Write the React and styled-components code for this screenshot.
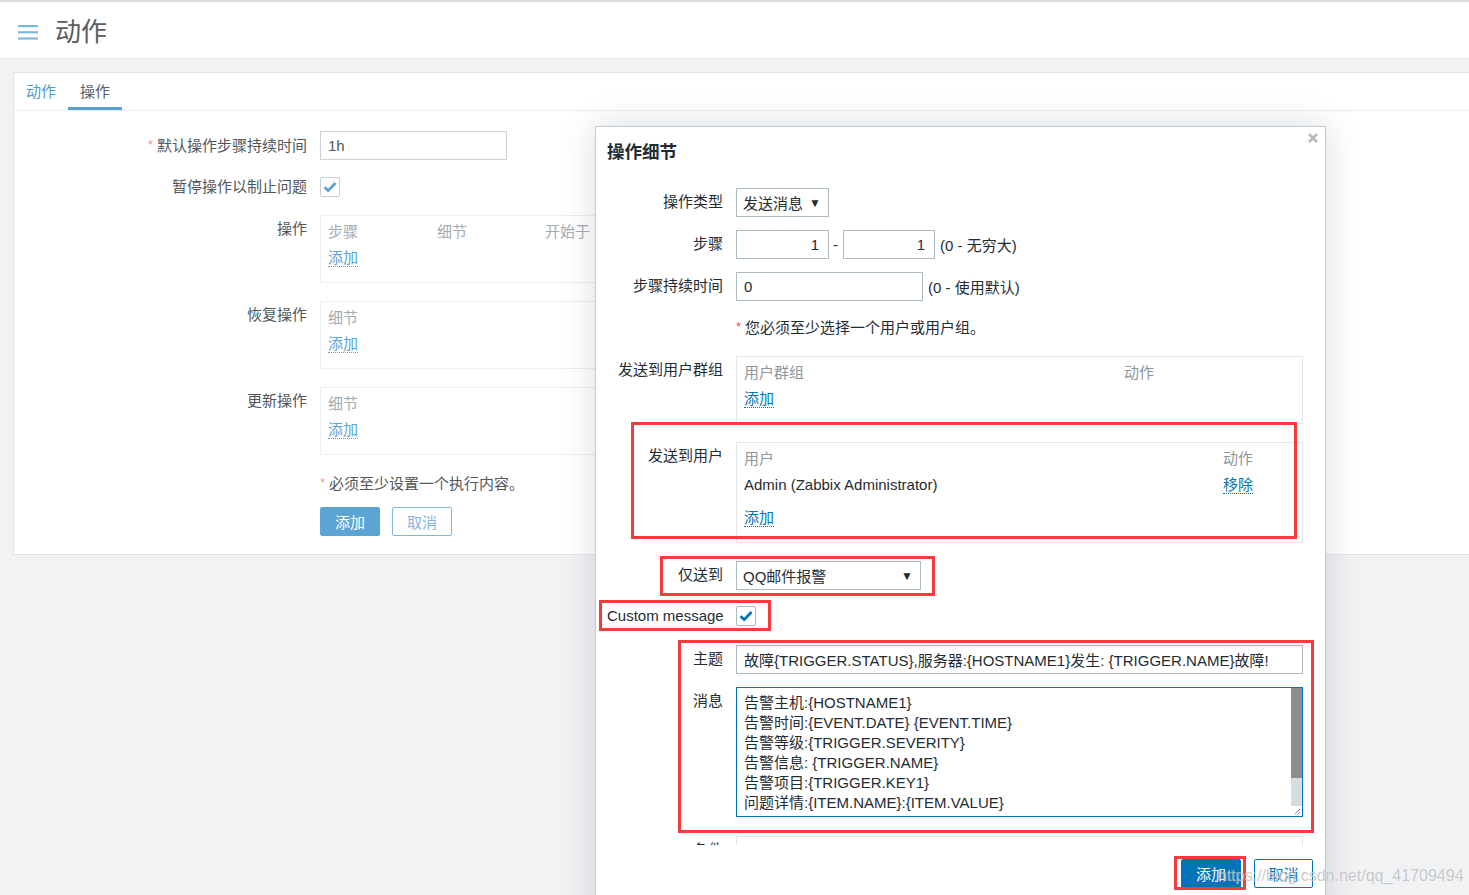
import React from 'react';
import styled, { createGlobalStyle } from 'styled-components';

const GlobalStyle = createGlobalStyle`
  html, body { margin: 0; padding: 0; }
  body {
    background: #f1f2f4;
    font-family: "Liberation Sans", "Noto Sans CJK SC", Arial, sans-serif;
    font-size: 15px;
    color: #1f2c33;
    overflow: hidden;
  }
  * { box-sizing: border-box; }
`;

const Page = styled.div`
  position: relative;
  width: 100%;
  height: 895px;
  overflow: hidden;
  background: #f1f2f4;
`;

const TopStrip = styled.div`
  height: 2px;
  background: #d8dbdf;
`;

const Header = styled.header`
  height: 57px;
  background: #fff;
  border-bottom: 1px solid #e4e7ea;
  display: flex;
  align-items: center;
  padding: 3px 0 0 18px;
  gap: 17px;
`;

const PageTitle = styled.h1`
  margin: 0;
  font-size: 26px;
  font-weight: normal;
  color: #585d61;
  line-height: 30px;
`;

const Main = styled.main`
  padding: 13px 0 0 13px;
`;

const Panel = styled.section`
  background: #fff;
  border: 1px solid #e2e5e8;
  border-right: none;
`;

const TabBar = styled.div`
  height: 38px;
  border-bottom: 1px solid #ebeef0;
  display: flex;
`;

const Tab = styled.div`
  position: relative;
  padding: 0 12px;
  line-height: 37px;
  font-size: 15px;
  color: ${p => (p.$active ? '#5a5f63' : '#4f9ad0')};
  &::after {
    content: '';
    display: ${p => (p.$active ? 'block' : 'none')};
    position: absolute;
    left: 0;
    right: 0;
    bottom: 0;
    height: 3px;
    background: #5aa2d0;
  }
`;

const Form = styled.div`
  padding: ${p => p.$pad};
`;

const FormRow = styled.div`
  display: grid;
  grid-template-columns: ${p => p.$labelW}px 1fr;
  column-gap: 13px;
  align-items: start;
  margin-top: ${p => p.$mt || 0}px;
`;

const Label = styled.div`
  text-align: right;
  line-height: 27px;
  font-size: 15px;
  white-space: nowrap;
  color: ${p => (p.$bg ? '#52575b' : '#1f2c33')};
`;

const Req = styled.span`
  color: ${p => (p.$bg ? '#e99a9a' : '#e45959')};
  margin-right: 4px;
  font-size: 13px;
  vertical-align: 2px;
`;

const Value = styled.div`
  display: flex;
  align-items: ${p => (p.$top ? 'flex-start' : 'center')};
  min-height: 29px;
  color: ${p => (p.$bg ? '#52575b' : '#1f2c33')};
  white-space: nowrap;
`;

const Field = styled.div`
  height: 29px;
  width: ${p => (p.$w ? `${p.$w}px` : '100%')};
  border: 1px solid ${p => (p.$bg ? '#cbd3d8' : '#acbbc2')};
  background: #fff;
  padding: ${p => (p.$right ? '0 9px 0 7px' : '0 7px')};
  display: flex;
  align-items: center;
  justify-content: ${p => (p.$right ? 'flex-end' : 'flex-start')};
  font-size: 15px;
  color: ${p => (p.$bg ? '#52575b' : '#1f2c33')};
  white-space: nowrap;
  overflow: hidden;
`;

const Select = styled.div`
  height: 29px;
  width: ${p => p.$w}px;
  border: 1px solid #acbbc2;
  background: #fff;
  padding: 0 7px 0 6px;
  display: flex;
  align-items: center;
  justify-content: space-between;
  font-size: 15px;
  color: #1f2c33;
`;

const Arrow = styled.span`
  font-size: 12px;
  color: #1f2c33;
`;

const Dash = styled.span`
  margin: 0 5px 0 4px;
`;

const Hint = styled.span`
  margin-left: 5px;
`;

const CheckBox = styled.div`
  width: 20px;
  height: 20px;
  margin-top: 4px;
  border: 1px solid ${p => (p.$bg ? '#c4ced4' : '#acbbc2')};
  border-radius: 2px;
  background: #fff;
  display: flex;
  align-items: center;
  justify-content: center;
`;

const TableBox = styled.div`
  width: ${p => (p.$w ? `${p.$w}px` : '100%')};
  height: ${p => (p.$h ? `${p.$h}px` : 'auto')};
  border: 1px solid ${p => (p.$bg ? '#eceef0' : '#e3e6e9')};
  padding: 1px 7px 11px;
  background: #fff;
`;

const TRow = styled.div`
  display: grid;
  grid-template-columns: ${p => p.$cols};
  height: 27px;
  align-items: center;
  margin-top: ${p => p.$mt || 0}px;
  color: ${p => (p.$bg ? '#52575b' : '#1f2c33')};
`;

const TH = styled.div`
  color: ${p => (p.$bg ? '#a5abb0' : '#8d969c')};
`;

const Link = styled.span`
  color: ${p => (p.$bg ? '#5ba4d6' : '#0275b8')};
  border-bottom: 1px dotted ${p => (p.$bg ? '#5ba4d6' : '#0275b8')};
  line-height: 17px;
  display: inline-block;
  justify-self: start;
`;

const Note = styled.div`
  line-height: ${p => p.$lh || 29}px;
  color: ${p => (p.$bg ? '#52575b' : '#1f2c33')};
  white-space: nowrap;
`;

const Buttons = styled.div`
  display: flex;
  gap: ${p => p.$gap}px;
  justify-content: ${p => p.$justify || 'flex-start'};
  padding: ${p => p.$pad || 0};
`;

const Button = styled.div`
  height: 29px;
  width: ${p => p.$w}px;
  border-radius: 2px;
  display: flex;
  align-items: center;
  justify-content: center;
  font-size: 15px;
  border: 1px solid ${p => p.$color};
  background: ${p => (p.$primary ? p.$color : '#fff')};
  color: ${p => (p.$primary ? '#fff' : p.$color)};
`;

const Dialog = styled.div`
  position: absolute;
  left: 595px;
  top: 126px;
  width: 731px;
  height: 820px;
  background: #fff;
  border: 1px solid #c3cbd1;
  box-shadow: 0 0 32px rgba(60, 75, 90, 0.2);
`;

const DialogHeader = styled.div`
  padding: 13px 11px 0;
`;

const DialogTitle = styled.h4`
  margin: 0;
  font-size: 17.5px;
  font-weight: bold;
  line-height: 24px;
  color: #1f2c33;
`;

const Close = styled.div`
  position: absolute;
  top: 6px;
  right: 7px;
  width: 10px;
  height: 10px;
  display: flex;
`;

const DialogBody = styled.div`
  height: 681px;
  overflow: hidden;
  padding: 24px 22px 0 11px;
`;

const TextArea = styled.div`
  position: relative;
  width: 100%;
  height: 130px;
  border: 1px solid #0275b8;
  padding: 5px 7px;
  line-height: 20px;
  font-size: 15px;
  color: #1f2c33;
  white-space: pre;
  overflow: hidden;
`;

const ScrollBar = styled.div`
  position: absolute;
  top: 0;
  right: 0;
  width: 11px;
  height: 118px;
  background: #d6dde2;
  display: flex;
  flex-direction: column;
`;

const Thumb = styled.div`
  height: 90px;
  background: #8e8e8e;
`;

const Grip = styled.div`
  position: absolute;
  right: 1px;
  bottom: 1px;
  width: 9px;
  height: 9px;
  display: flex;
`;

const Annotation = styled.div`
  position: absolute;
  left: ${p => p.$x}px;
  top: ${p => p.$y}px;
  width: ${p => p.$w}px;
  height: ${p => p.$h}px;
  border: 3px solid #f53b3b;
  pointer-events: none;
`;

const Watermark = styled.div`
  position: absolute;
  left: 1218px;
  top: 866px;
  font-family: "Liberation Sans", Arial, sans-serif;
  font-size: 16px;
  line-height: 20px;
  color: rgba(175, 180, 185, 0.7);
  text-shadow: 0 0 1px rgba(255, 255, 255, 0.6);
  white-space: nowrap;
`;

const Hamburger = () => (
  <svg width="20" height="16" viewBox="0 0 20 16">
    <rect x="0" y="1" width="20" height="2.2" fill="#7db8df" />
    <rect x="0" y="7.2" width="20" height="2.2" fill="#7db8df" />
    <rect x="0" y="13.4" width="20" height="2.2" fill="#7db8df" />
  </svg>
);

const Check = ({ color }) => (
  <svg width="14" height="12" viewBox="0 0 14 12">
    <path d="M1.5 6.2 L5.2 9.6 L12.5 2" fill="none" stroke={color} strokeWidth="2.8" />
  </svg>
);

const BG_LW = 293;
const DLG_LW = 116;

const BgTable = ({ headers, cols }) => (
  <TableBox $bg $w={620}>
    <TRow $bg $cols={cols}>
      {headers.map(h => (
        <TH $bg key={h}>{h}</TH>
      ))}
    </TRow>
    <TRow $bg $cols="1fr">
      <Link $bg>添加</Link>
    </TRow>
  </TableBox>
);

const messageText = `告警主机:{HOSTNAME1}
告警时间:{EVENT.DATE} {EVENT.TIME}
告警等级:{TRIGGER.SEVERITY}
告警信息: {TRIGGER.NAME}
告警项目:{TRIGGER.KEY1}
问题详情:{ITEM.NAME}:{ITEM.VALUE}`;

export default function App() {
  return (
    <>
      <GlobalStyle />
      <Page>
        <TopStrip />
        <Header>
          <Hamburger />
          <PageTitle>动作</PageTitle>
        </Header>
        <Main>
          <Panel>
            <TabBar>
              <Tab>动作</Tab>
              <Tab $active>操作</Tab>
            </TabBar>
            <Form $pad="20px 0 18px 0">
              <FormRow $labelW={BG_LW}>
                <Label $bg>
                  <Req $bg>*</Req>默认操作步骤持续时间
                </Label>
                <Value $bg>
                  <Field $bg $w={187}>1h</Field>
                </Value>
              </FormRow>
              <FormRow $labelW={BG_LW} $mt={13}>
                <Label $bg>暂停操作以制止问题</Label>
                <Value $bg $top>
                  <CheckBox $bg>
                    <Check color="#5ba4d6" />
                  </CheckBox>
                </Value>
              </FormRow>
              <FormRow $labelW={BG_LW} $mt={13}>
                <Label $bg>操作</Label>
                <BgTable headers={['步骤', '细节', '开始于']} cols="109px 108px 1fr" />
              </FormRow>
              <FormRow $labelW={BG_LW} $mt={18}>
                <Label $bg>恢复操作</Label>
                <BgTable headers={['细节']} cols="1fr" />
              </FormRow>
              <FormRow $labelW={BG_LW} $mt={18}>
                <Label $bg>更新操作</Label>
                <BgTable headers={['细节']} cols="1fr" />
              </FormRow>
              <FormRow $labelW={BG_LW} $mt={13}>
                <div />
                <Note $bg>
                  <Req $bg>*</Req>必须至少设置一个执行内容。
                </Note>
              </FormRow>
              <FormRow $labelW={BG_LW} $mt={9}>
                <div />
                <Buttons $gap={12}>
                  <Button $primary $w={60} $color="#5ba4d3">添加</Button>
                  <Button $w={60} $color="#7fb7de">取消</Button>
                </Buttons>
              </FormRow>
            </Form>
          </Panel>
        </Main>

        <Dialog>
          <DialogHeader>
            <DialogTitle>操作细节</DialogTitle>
          </DialogHeader>
          <Close>
            <svg width="10" height="10" viewBox="0 0 10 10">
              <path d="M1 1 L9 9 M9 1 L1 9" stroke="#b3bcc3" strokeWidth="2.6" />
            </svg>
          </Close>
          <DialogBody>
            <FormRow $labelW={DLG_LW}>
              <Label>操作类型</Label>
              <Value>
                <Select $w={93}>
                  发送消息<Arrow>▼</Arrow>
                </Select>
              </Value>
            </FormRow>
            <FormRow $labelW={DLG_LW} $mt={13}>
              <Label>步骤</Label>
              <Value>
                <Field $right $w={93}>1</Field>
                <Dash>-</Dash>
                <Field $right $w={92}>1</Field>
                <Hint>(0 - 无穷大)</Hint>
              </Value>
            </FormRow>
            <FormRow $labelW={DLG_LW} $mt={13}>
              <Label>步骤持续时间</Label>
              <Value>
                <Field $w={187}>0</Field>
                <Hint>(0 - 使用默认)</Hint>
              </Value>
            </FormRow>
            <FormRow $labelW={DLG_LW} $mt={13}>
              <div />
              <Note $lh={26}>
                <Req>*</Req>您必须至少选择一个用户或用户组。
              </Note>
            </FormRow>
            <FormRow $labelW={DLG_LW} $mt={15}>
              <Label>发送到用户群组</Label>
              <TableBox>
                <TRow $cols="380px 1fr">
                  <TH>用户群组</TH>
                  <TH>动作</TH>
                </TRow>
                <TRow $cols="1fr">
                  <Link>添加</Link>
                </TRow>
              </TableBox>
            </FormRow>
            <FormRow $labelW={DLG_LW} $mt={18}>
              <Label>发送到用户</Label>
              <TableBox>
                <TRow $cols="479px 1fr">
                  <TH>用户</TH>
                  <TH>动作</TH>
                </TRow>
                <TRow $cols="479px 1fr">
                  <span>Admin (Zabbix Administrator)</span>
                  <Link>移除</Link>
                </TRow>
                <TRow $cols="1fr" $mt={6}>
                  <Link>添加</Link>
                </TRow>
              </TableBox>
            </FormRow>
            <FormRow $labelW={DLG_LW} $mt={18}>
              <Label>仅送到</Label>
              <Value>
                <Select $w={185}>
                  QQ邮件报警<Arrow>▼</Arrow>
                </Select>
              </Value>
            </FormRow>
            <FormRow $labelW={DLG_LW} $mt={12}>
              <Label>Custom message</Label>
              <Value $top>
                <CheckBox>
                  <Check color="#0275b8" />
                </CheckBox>
              </Value>
            </FormRow>
            <FormRow $labelW={DLG_LW} $mt={14}>
              <Label>主题</Label>
              <Value>
                <Field>故障{'{TRIGGER.STATUS}'},服务器:{'{HOSTNAME1}'}发生: {'{TRIGGER.NAME}'}故障!</Field>
              </Value>
            </FormRow>
            <FormRow $labelW={DLG_LW} $mt={13}>
              <Label>消息</Label>
              <TextArea>
                {messageText}
                <ScrollBar>
                  <Thumb />
                </ScrollBar>
                <Grip>
                  <svg width="9" height="9" viewBox="0 0 9 9">
                    <path d="M8 3 L3 8 M8 6 L6 8" stroke="#8a8a8a" strokeWidth="1" />
                  </svg>
                </Grip>
              </TextArea>
            </FormRow>
            <FormRow $labelW={DLG_LW} $mt={19}>
              <Label>条件</Label>
              <TableBox $h={80} />
            </FormRow>
          </DialogBody>
          <Buttons $gap={13} $justify="flex-end" $pad="14px 12px 0 0">
            <Button $primary $w={60} $color="#0275b8">添加</Button>
            <Button $w={59} $color="#0275b8">取消</Button>
          </Buttons>
        </Dialog>

        <Annotation $x={631} $y={422} $w={666} $h={117} />
        <Annotation $x={660} $y={556} $w={275} $h={40} />
        <Annotation $x={599} $y={600} $w={172} $h={31} />
        <Annotation $x={678} $y={640} $w={636} $h={193} />
        <Annotation $x={1174} $y={856} $w={72} $h={34} />
        <Watermark>https://blog.csdn.net/qq_41709494</Watermark>
      </Page>
    </>
  );
}
